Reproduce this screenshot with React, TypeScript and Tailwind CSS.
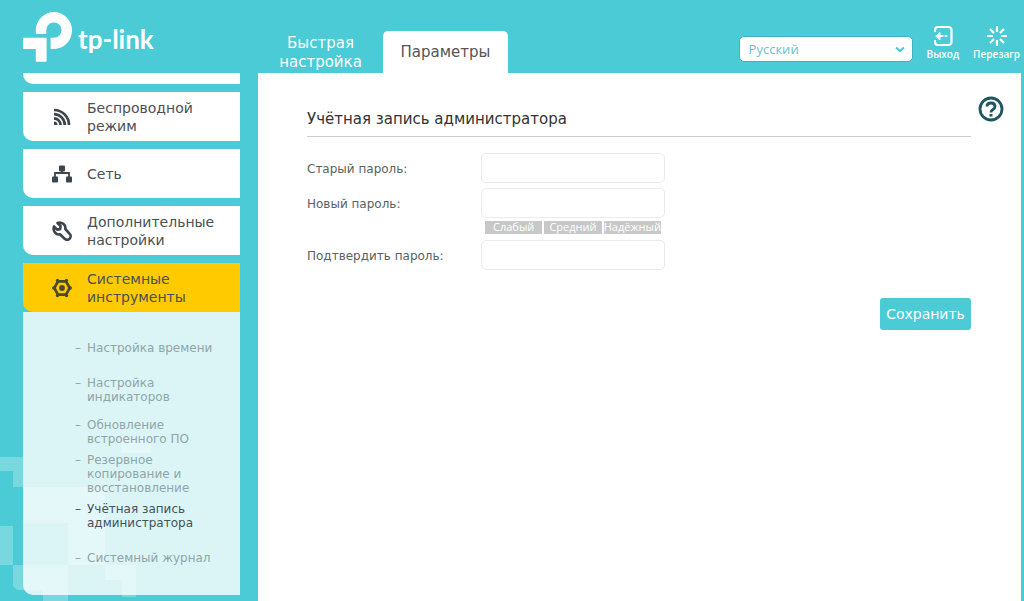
import React, { useState } from "react";

interface MenuItem { label: string; icon: React.ReactNode; active?: boolean }

const TOOLS = [
  "Настройка времени",
  "Настройка индикаторов",
  "Обновление встроенного ПО",
  "Резервное копирование и восстановление",
  "Учётная запись администратора",
  "Системный журнал",
];

const STRENGTH = ["Слабый", "Средний", "Надёжный"];

function Logo() {
  return (
    <a href="#" className="flex items-center gap-1.5 text-white">
      <svg width="49" height="50" viewBox="23 12 49 50" fill="currentColor" aria-hidden="true">
        <path d="M35.8 34V30.3A18.1 18.2 0 0 1 72 30.3A18.1 18.7 0 0 1 54 49H50.6V37.7H54A7.6 7.6 0 1 0 46.3 30.3V34Z" />
        <path d="M23 38.5Q23 37.7 23.8 37.7H46.6V61Q46.6 61.8 45.8 61.8H36.6Q35.8 61.8 35.8 61V49H23.8Q23 49 23 48.2Z" />
      </svg>
      <span className="pt-1 font-['Lato',sans-serif] text-[26px] leading-8 font-bold">tp-link</span>
    </a>
  );
}

function WirelessIcon() {
  return (
    <svg width="18" height="18" viewBox="0 0 18 18" fill="none" stroke="currentColor" strokeWidth="2.7" aria-hidden="true">
      <path d="M1 2A15 15 0 0 1 16 17M1 6.2A10.8 10.8 0 0 1 11.8 17M1 10.4A6.6 6.6 0 0 1 7.6 17" />
      <path d="M1 13.5A3.5 3.5 0 0 1 4.5 17H1Z" fill="currentColor" stroke="none" />
    </svg>
  );
}

function NetworkIcon() {
  return (
    <svg width="20" height="18" viewBox="0 0 20 18" fill="currentColor" aria-hidden="true">
      <rect x="7" y="0.5" width="6" height="6" rx="1" />
      <rect x="0" y="11.5" width="6" height="6" rx="1" />
      <rect x="14" y="11.5" width="6" height="6" rx="1" />
      <path d="M10 6V8M3 12V8H17V12" fill="none" stroke="currentColor" strokeWidth="1.8" />
    </svg>
  );
}

function WrenchIcon() {
  return (
    <svg width="20" height="20" viewBox="0 0 20 20" fill="none" stroke="currentColor" strokeWidth="2.6" strokeLinejoin="round" aria-hidden="true">
      <path d="M5.5 2L8.6 5.1L8.1 8.1L5.1 8.6L2 5.5C0.5 9.8 3.8 14.2 8 13.3L12.6 17.7A3.4 3.4 0 0 0 17.7 12.8L13.3 8C14.2 3.8 9.8 0.5 5.5 2Z" />
    </svg>
  );
}

function SystemIcon() {
  return (
    <svg width="20" height="20" viewBox="0 0 20 20" fill="none" stroke="currentColor" aria-hidden="true">
      <path d="M6 3.3H14L17.7 10L14 16.7H6L2.3 10Z" strokeWidth="2.7" strokeLinejoin="round" />
      <g fill="currentColor" stroke="none">
        <circle cx="5.5" cy="2.5" r="1.7" /><circle cx="14.5" cy="2.5" r="1.7" />
        <circle cx="18.3" cy="10" r="1.7" /><circle cx="14.5" cy="17.5" r="1.7" />
        <circle cx="5.5" cy="17.5" r="1.7" /><circle cx="1.7" cy="10" r="1.7" />
        <circle cx="10" cy="10" r="2.9" />
      </g>
    </svg>
  );
}

function Backdrop() {
  return (
    <svg className="absolute bottom-0 left-0" width="160" height="165" viewBox="0 0 160 165" fill="#fff" fillOpacity="0.25" aria-hidden="true">
      <path d="M0 21H23V51H13V35H0Z" />
      <path d="M23 51H105V129H68V87H23Z" />
      <path d="M0 90H13V129H0Z" />
      <path d="M13 129H68V165H43V154H17L13 150Z" />
      <path d="M121 0H151V17H121Z" />
      <path d="M105 129H136V161H122V144H105Z" />
    </svg>
  );
}

const MENU: MenuItem[] = [
  { label: "Беспроводной режим", icon: <WirelessIcon /> },
  { label: "Сеть", icon: <NetworkIcon /> },
  { label: "Дополнительные настройки", icon: <WrenchIcon /> },
  { label: "Системные инструменты", icon: <SystemIcon />, active: true },
];

function Sidebar() {
  return (
    <nav className="relative w-[217px] shrink-0">
      <ul className="flex flex-col gap-2">
        <li className="h-[11px] rounded-bl-[10px] bg-white" />
        {MENU.map(m => (
          <li key={m.label}>
            <a href="#" className={`flex h-[49px] items-center rounded-bl-[10px] text-[14px] leading-[18px] text-[#4a4f54] ${m.active ? "bg-[#ffcb00]" : "bg-white"}`}>
              <span className={`flex w-16 shrink-0 justify-center pl-[14px] ${m.active ? "text-[#4d4a2a]" : "text-[#3d454c]"}`}>{m.icon}</span>
              <span className="w-[140px]">{m.label}</span>
            </a>
          </li>
        ))}
      </ul>
      <ul className="rounded-bl-[10px] bg-white/80 pt-[15px] pb-4 text-[12px] leading-[14px]">
        {TOOLS.map(t => (
          <li key={t} className="flex h-[42px] items-center pl-[52px]">
            <a href="#" className={`flex w-36 ${t === "Учётная запись администратора" ? "text-[#43535a]" : "text-[#8fa5a8]"}`}>
              <span className="w-3 shrink-0">–</span>
              <span>{t}</span>
            </a>
          </li>
        ))}
      </ul>
    </nav>
  );
}

function Header() {
  const [lang, setLang] = useState("ru");
  return (
    <header className="flex h-[73px] pl-[23px]">
      <div className="w-[235px] shrink-0 pt-3"><Logo /></div>
      <div className="flex items-end">
        <a href="#" className="w-[125px] pb-px text-center text-[15px] leading-[19px] text-white">Быстрая настройка</a>
        <a href="#" className="flex h-[42px] w-[125px] items-center justify-center rounded-t-[5px] bg-white text-[15px] text-[#555]">Параметры</a>
      </div>
      <div className="ml-auto flex items-start gap-[14px] pr-1">
        <div className="relative mt-9">
          <select aria-label="Язык" value={lang} onChange={e => setLang(e.target.value)}
            className="block h-[26px] w-[174px] appearance-none rounded-[5px] border border-[#3fb3bd] bg-white px-[9px] font-['Open_Sans',sans-serif] text-[13px] leading-[18px] text-[#6cbfca]">
            <option value="ru">Русский</option>
            <option value="en">English</option>
          </select>
          <svg className="pointer-events-none absolute top-[10px] right-2" width="10" height="7" viewBox="0 0 10 7" fill="none" stroke="#4acbd6" strokeWidth="2.2" aria-hidden="true">
            <path d="M1 1.5L5 5L9 1.5" />
          </svg>
        </div>
        <button className="mt-[25px] flex flex-col items-center font-['Open_Sans',sans-serif] text-[10px] leading-[15px] font-semibold text-white">
          <svg width="20" height="22" viewBox="0 0 20 22" fill="none" stroke="currentColor" strokeWidth="2.2" strokeLinecap="round" aria-hidden="true">
            <path d="M2 6V5Q2 2 5 2H15Q18.5 2 18.5 5V17Q18.5 20 15 20H5Q2 20 2 17V16" />
            <path d="M7 11H9.5M12.5 11H13.5" />
            <path d="M3 11L7 7.5V14.5Z" fill="currentColor" strokeWidth="1" strokeLinejoin="round" />
          </svg>
          Выход
        </button>
        <button className="mt-[25px] flex flex-col items-center font-['Open_Sans',sans-serif] text-[10px] leading-[15px] font-semibold text-white">
          <svg width="22" height="22" viewBox="0 0 22 22" stroke="currentColor" strokeWidth="2.2" aria-hidden="true">
            <path d="M11 1V7M11 15V21M1 11H7M15 11H21M4 4L8 8M14 14L18 18M18 4L14 8M8 14L4 18" />
          </svg>
          Перезагр
        </button>
      </div>
    </header>
  );
}

function PasswordRow({ id, label, children }: { id: string; label: string; children?: React.ReactNode }) {
  const [value, setValue] = useState("");
  return (
    <div className="flex items-start">
      <label htmlFor={id} className="w-[174px] shrink-0 text-[12px] leading-8 text-[#5a5f63]">{label}</label>
      <div>
        <input id={id} type="password" value={value} onChange={e => setValue(e.target.value)}
          className="block h-[30px] w-[184px] rounded-[5px] border border-[#ebebeb] bg-white px-2 text-[12px] outline-none focus:border-[#4acbd6]" />
        {children}
      </div>
    </div>
  );
}

export default function App() {
  return (
    <div className="relative flex min-h-screen flex-col overflow-hidden bg-[#4acbd6] font-['DejaVu_Sans',Verdana,sans-serif]">
      <Backdrop />
      <Header />
      <div className="flex flex-1 pr-[3px] pl-[23px]">
        <Sidebar />
        <main className="ml-[18px] flex flex-1 items-start bg-white pl-[49px]">
          <form onSubmit={e => e.preventDefault()} className="flex-1 pt-9">
            <h1 className="border-b border-[#ccc] pb-[7px] text-[15px] leading-5 text-[#333]">Учётная запись администратора</h1>
            <div className="flex flex-col gap-[3px] pt-4">
              <PasswordRow id="old" label="Старый пароль:" />
              <PasswordRow id="new" label="Новый пароль:">
                <div className="flex gap-[2px] px-1 pt-[3px] pb-[3px]">
                  {STRENGTH.map(s => (
                    <span key={s} className="h-[13px] flex-1 basis-0 bg-[#c8c8c8] text-center font-['Open_Sans',sans-serif] text-[11px] leading-[12px] text-white">{s}</span>
                  ))}
                </div>
              </PasswordRow>
              <PasswordRow id="confirm" label="Подтвердить пароль:" />
            </div>
            <div className="flex justify-end pt-[26px]">
              <button type="submit" className="h-8 w-[91px] rounded-[3px] bg-[#4acbd6] text-center text-[14px] text-white">Сохранить</button>
            </div>
          </form>
          <button aria-label="Помощь" className="mt-[23px] mr-[17px] ml-[7px] text-[#1c5763]">
            <svg width="26" height="26" viewBox="0 0 26 26" fill="none" stroke="currentColor" aria-hidden="true">
              <circle cx="13" cy="13" r="11" strokeWidth="2.8" />
              <path d="M9 10.5Q9 7 13 7T17 10.5Q17 12.3 15 13.4Q13 14.5 13 16.5" strokeWidth="2.8" />
              <path d="M11.5 18H14.5V20.5H11.5Z" fill="currentColor" stroke="none" />
            </svg>
          </button>
        </main>
      </div>
    </div>
  );
}
